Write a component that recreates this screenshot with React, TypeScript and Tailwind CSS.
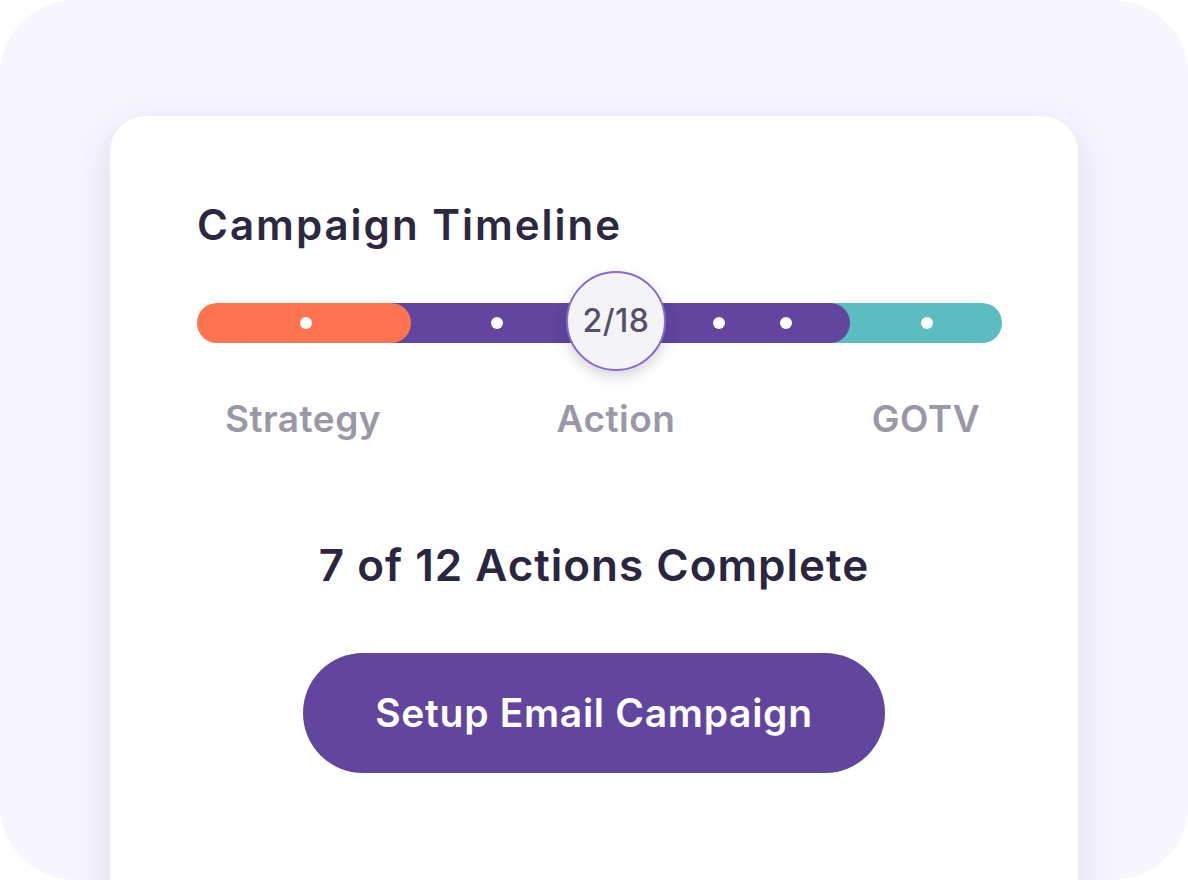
import React from "react";

const font = { fontFamily: "Inter, 'Noto Sans', sans-serif" };

const Dot = ({ className = "" }: { className?: string }) => (
  <span className={"block w-3 h-3 rounded-full bg-white shrink-0 " + className} />
);

const Timeline: React.FC = () => {
  return (
    <div className="w-[805px]">
      {/* Bar */}
      <div className="relative flex h-10">
        <div className="relative z-30 w-[214px] h-10 rounded-full bg-[#ff7350] flex items-center pl-[103px]">
          <Dot />
        </div>
        <div className="relative z-20 -ml-10 w-[479px] h-10 rounded-full bg-[#61459e] flex items-center pl-[120px]">
          <Dot />
          <Dot className="ml-[210px]" />
          <Dot className="ml-[55px]" />
        </div>
        <div className="relative z-10 -ml-10 flex-1 h-10 rounded-full bg-[#5bbdbf] flex items-center pl-[111px]">
          <Dot />
        </div>

        {/* Current step marker */}
        <div className="absolute z-40 left-[369px] -top-[32px] w-[100px] h-[100px] rounded-full bg-[#f4f4f6] border-2 border-[#8a68cc] shadow-[0_6px_14px_rgba(40,30,80,0.18)] flex items-center justify-center">
          <span className="text-[32px] font-medium text-[#55506a] tracking-[0.5px]">2/18</span>
        </div>
      </div>

      {/* Phase labels */}
      <div className="flex mt-[57px] text-[37px] font-semibold text-[#9a98a6] leading-none tracking-[0.5px]">
        <span className="w-[200px] shrink-0 text-center ml-[6px]">Strategy</span>
        <span className="w-[200px] shrink-0 text-center ml-[113px]">Action</span>
        <span className="w-[200px] shrink-0 text-center ml-[110px]">GOTV</span>
      </div>
    </div>
  );
};

export default function App() {
  return (
    <div style={font} className="w-[1188px] h-[880px] bg-[#f7f5fe] rounded-[75px] overflow-hidden pt-[116px] px-[110px]">
      <div className="h-[800px] bg-white rounded-[36px] shadow-[0_12px_40px_rgba(70,60,140,0.14)] pt-[88px] pl-[87px] pr-[76px]">
        <h1 className="text-[42px] font-semibold text-[#2d2842] leading-none tracking-[2px]">
          Campaign Timeline
        </h1>
        <div className="mt-[57px]">
          <Timeline />
        </div>
        <div className="flex flex-col items-center -ml-[87px] -mr-[76px]">
          <p className="mt-[106px] text-[44px] font-semibold text-[#2b2640] leading-none tracking-[1px]">
            7 of 12 Actions Complete
          </p>
          <button className="mt-[66px] w-[582px] h-[120px] rounded-full bg-[#62459e] text-white text-[39px] font-semibold tracking-[0.7px]">
            Setup Email Campaign
          </button>
        </div>
      </div>
    </div>
  );
}
